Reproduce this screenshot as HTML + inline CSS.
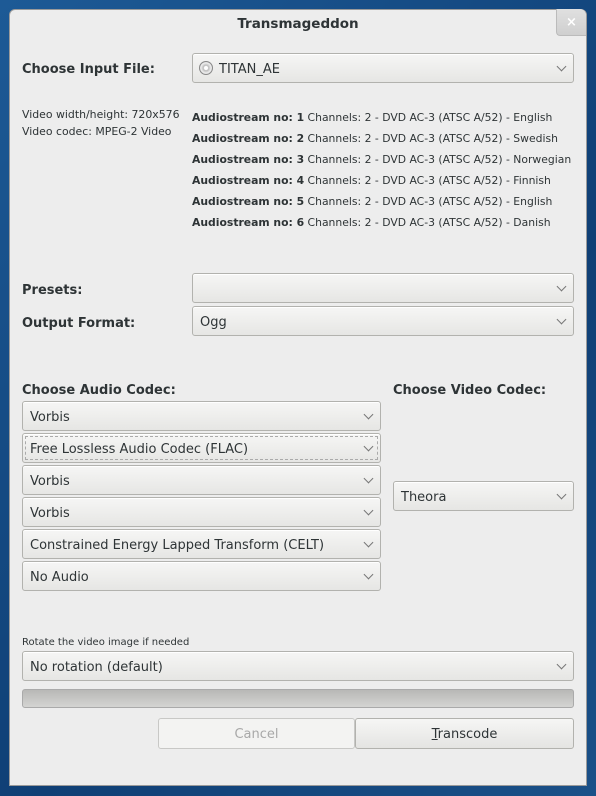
<!DOCTYPE html><html><head><style>
*{margin:0;padding:0;box-sizing:border-box}
body{width:596px;height:796px;background:linear-gradient(135deg,#1d5a96,#0f3f75 60%,#1a5088);position:relative;overflow:hidden;font-family:"DejaVu Sans","Liberation Sans",sans-serif;color:#2e3436}
.win{position:absolute;left:9px;top:9px;width:578px;height:777px;background:#ededed;border-radius:6px 6px 0 0;border:1px solid #9a9a9a}
.title{position:absolute;left:0;width:596px;text-align:center;top:16px;font-weight:bold;font-size:13.5px;font-family:"DejaVu Sans",sans-serif}
.close{position:absolute;left:556px;top:9px;width:30px;height:27px;background:linear-gradient(#e0e0e0,#cfcfcf);border-left:1px solid #bbb;border-bottom:1px solid #bbb;border-radius:0 6px 0 4px;color:#fff;font-weight:bold;text-align:center;font-size:13px;line-height:27px}
.a{position:absolute;white-space:nowrap}
.lbl{font-weight:bold;font-size:13px;font-family:"DejaVu Sans",sans-serif}
.c{position:absolute;height:30px;border:1px solid #b2b2ae;border-radius:3px;background:linear-gradient(#f6f6f5,#e6e6e4);font-size:13px;line-height:31px;padding-left:7px;white-space:nowrap;box-shadow:0 1px 0 #fff inset}
.c:after{content:"";position:absolute;right:8px;top:9px;width:6px;height:6px;border-right:1.3px solid #777;border-bottom:1.3px solid #777;transform:rotate(45deg)}
.s{font-size:10.8px;line-height:21px}
.s b{font-weight:bold}
</style></head><body>
<div class="win"></div>
<div class="title">Transmageddon</div>
<div class="close">×</div>
<div class="a lbl" style="left:22px;top:62px">Choose Input File:</div>
<div class="c" style="left:192px;top:53px;width:382px;padding-left:26px"><span style="position:absolute;left:6px;top:7px;width:14px;height:14px;border-radius:50%;border:1px solid #888;background:radial-gradient(#fff 20%,#bbb 30%,#eee 60%,#aaa)"></span>TITAN_AE</div>
<div class="a" style="left:22px;top:106px;font-size:10.9px;line-height:17px">Video width/height: 720x576<br>Video codec: MPEG-2 Video</div>
<div class="a s" style="left:192px;top:107px">
<b>Audiostream no: 1</b> Channels: 2 - DVD AC-3 (ATSC A/52) - English<br>
<b>Audiostream no: 2</b> Channels: 2 - DVD AC-3 (ATSC A/52) - Swedish<br>
<b>Audiostream no: 3</b> Channels: 2 - DVD AC-3 (ATSC A/52) - Norwegian<br>
<b>Audiostream no: 4</b> Channels: 2 - DVD AC-3 (ATSC A/52) - Finnish<br>
<b>Audiostream no: 5</b> Channels: 2 - DVD AC-3 (ATSC A/52) - English<br>
<b>Audiostream no: 6</b> Channels: 2 - DVD AC-3 (ATSC A/52) - Danish</div>
<div class="a lbl" style="left:22px;top:283px">Presets:</div>
<div class="c" style="left:192px;top:273px;width:382px"></div>
<div class="a lbl" style="left:22px;top:316px">Output Format:</div>
<div class="c" style="left:192px;top:306px;width:382px">Ogg</div>
<div class="a lbl" style="left:22px;top:383px">Choose Audio Codec:</div>
<div class="a lbl" style="left:393px;top:383px">Choose Video Codec:</div>
<div class="c" style="left:22px;top:401px;width:359px">Vorbis</div>
<div class="c" style="left:22px;top:433px;width:359px;outline:1px dashed #aaa;outline-offset:-4px">Free Lossless Audio Codec (FLAC)</div>
<div class="c" style="left:22px;top:465px;width:359px">Vorbis</div>
<div class="c" style="left:22px;top:497px;width:359px">Vorbis</div>
<div class="c" style="left:22px;top:529px;width:359px">Constrained Energy Lapped Transform (CELT)</div>
<div class="c" style="left:22px;top:561px;width:359px">No Audio</div>
<div class="c" style="left:393px;top:481px;width:181px">Theora</div>
<div class="a" style="left:22px;top:637px;font-size:10px">Rotate the video image if needed</div>
<div class="c" style="left:22px;top:651px;width:552px">No rotation (default)</div>
<div class="a" style="left:22px;top:689px;width:552px;height:19px;border:1px solid #aaa;border-radius:3px;background:linear-gradient(#b8b8b6,#d4d4d2)"></div>
<div class="a" style="left:158px;top:718px;width:197px;height:31px;border:1px solid #c8c8c6;border-radius:3px;background:#f3f3f2;color:#a8a8a8;text-align:center;line-height:32px;font-size:13px">Cancel</div>
<div class="a" style="left:355px;top:718px;width:219px;height:31px;border:1px solid #b2b2ae;border-radius:3px;background:linear-gradient(#f6f6f5,#e4e4e2);text-align:center;line-height:32px;font-size:13px"><u>T</u>ranscode</div>
</body></html>
